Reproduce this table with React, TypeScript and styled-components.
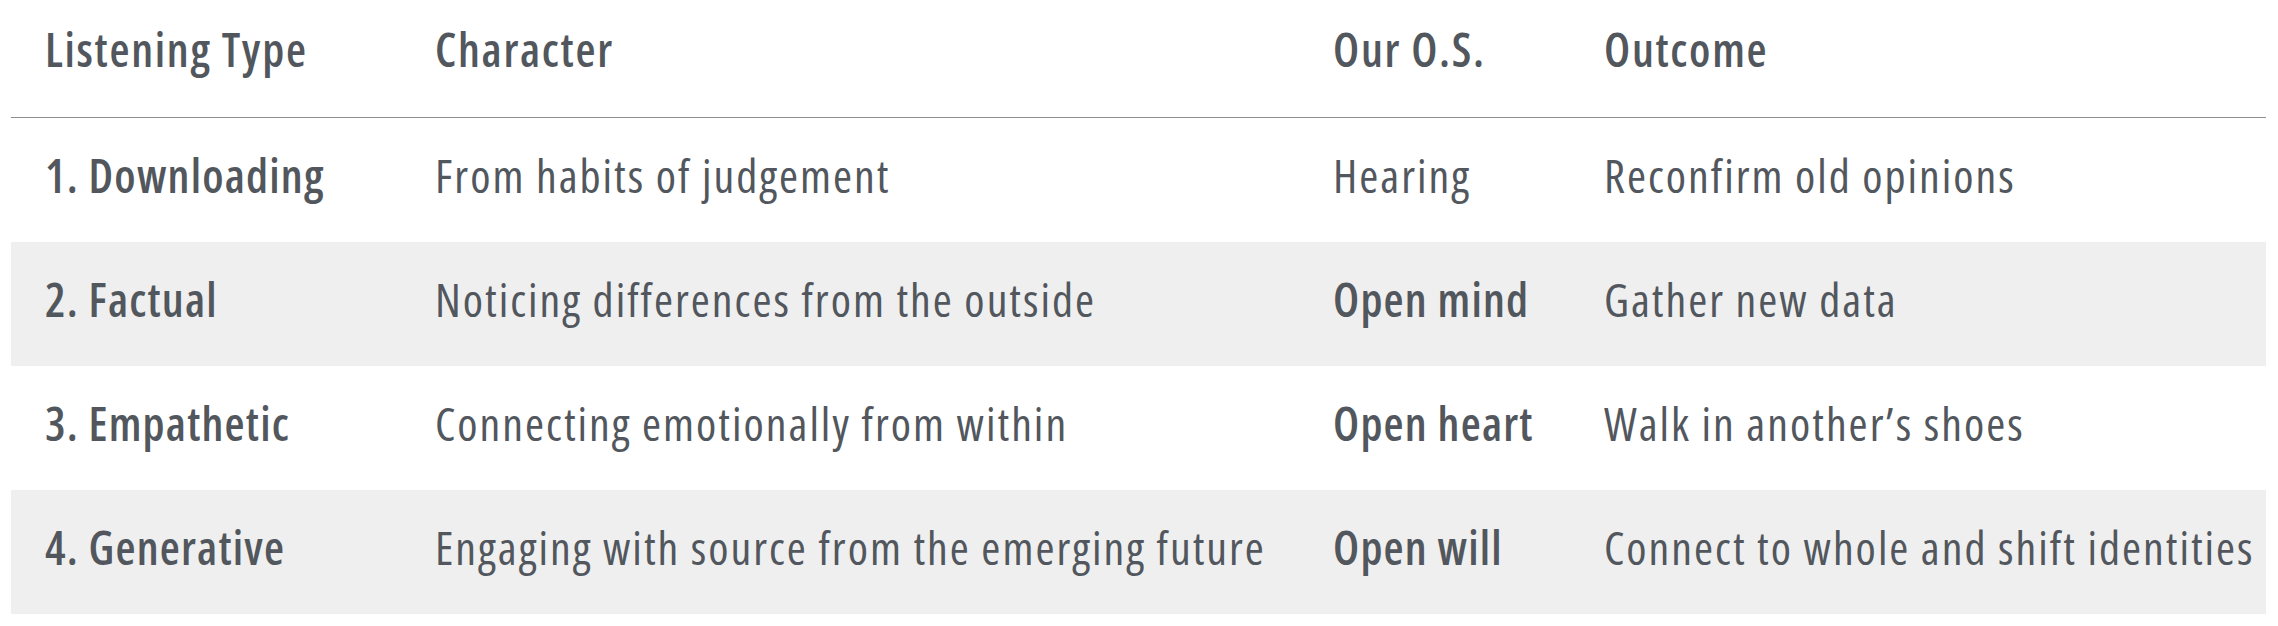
import styled, { createGlobalStyle } from "styled-components";

type Row = {
    type: string;
    character: string;
    os: string;
    osStrong: boolean;
    outcome: string;
};

const GlobalStyle = createGlobalStyle`
    html, body {
        margin: 0;
        padding: 0;
        background: #ffffff;
    }
    body {
        font-family: "Open Sans", Roboto, sans-serif;
        font-stretch: condensed;
        color: #52575e;
    }
`;

export default function App() {
    const rows: Row[] = [
        { type: "1. Downloading", character: "From habits of judgement", os: "Hearing", osStrong: false, outcome: "Reconfirm old opinions" },
        { type: "2. Factual", character: "Noticing differences from the outside", os: "Open mind", osStrong: true, outcome: "Gather new data" },
        { type: "3. Empathetic", character: "Connecting emotionally from within", os: "Open heart", osStrong: true, outcome: "Walk in another\u2019s shoes" },
        { type: "4. Generative", character: "Engaging with source from the emerging future", os: "Open will", osStrong: true, outcome: "Connect to whole and shift identities" },
    ];

    return (
        <>
            <GlobalStyle />
            <Table>
                <HeadRow>
                    <HeadCell>Listening Type</HeadCell>
                    <HeadCell>Character</HeadCell>
                    <HeadCell>Our O.S.</HeadCell>
                    <HeadCell>Outcome</HeadCell>
                </HeadRow>
                {rows.map((r, idx) => (
                    <BodyRow key={idx} striped={idx % 2 === 1}>
                        <Cell strong>{r.type}</Cell>
                        <Cell>{r.character}</Cell>
                        <Cell strong={r.osStrong}>{r.os}</Cell>
                        <Cell>{r.outcome}</Cell>
                    </BodyRow>
                ))}
            </Table>
        </>
    );
}

const Table = styled.div`
    display: flex;
    flex-direction: column;
    margin: 0 12px 0 11px;
`;

const columns = `390px 898px 271px 1fr`;

const HeadRow = styled.div`
    display: grid;
    grid-template-columns: ${columns};
    align-items: center;
    height: 118px;
    box-sizing: border-box;
    padding-bottom: 20px;
    border-bottom: 1px solid #8e8e8e;
`;

const HeadCell = styled.div`
    padding-left: 34px;
    font-size: 46px;
    font-weight: 600;
    letter-spacing: 1.7px;
    white-space: nowrap;
`;

const BodyRow = styled.div<{ striped: boolean }>`
    display: grid;
    grid-template-columns: ${columns};
    align-items: center;
    height: 124px;
    box-sizing: border-box;
    padding-bottom: 11px;
    background: ${p => (p.striped ? "#efefef" : "transparent")};
`;

const Cell = styled.div<{ strong?: boolean }>`
    padding-left: 34px;
    font-size: 46px;
    font-weight: ${p => (p.strong ? 600 : 400)};
    letter-spacing: ${p => (p.strong ? "1.2px" : "2px")};
    white-space: nowrap;
`;
